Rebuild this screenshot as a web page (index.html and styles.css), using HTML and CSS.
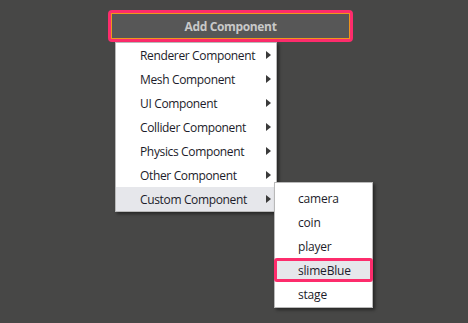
FILE: index.html
```html
<!DOCTYPE html>
<html>
<head>
<meta charset="utf-8">
<link rel="stylesheet" href="styles.css">
</head>
<body>
<div class="stage">
  <div class="dropdown">
    <div class="btn-frame">
      <div class="btn">Add Component</div>
    </div>
    <ul class="menu">
      <li class="item">Renderer Component<span class="arrow"></span></li>
      <li class="item">Mesh Component<span class="arrow"></span></li>
      <li class="item">UI Component<span class="arrow"></span></li>
      <li class="item">Collider Component<span class="arrow"></span></li>
      <li class="item">Physics Component<span class="arrow"></span></li>
      <li class="item">Other Component<span class="arrow"></span></li>
      <li class="item active">Custom Component<span class="arrow"></span>
        <ul class="submenu">
          <li class="sub">camera</li>
          <li class="sub">coin</li>
          <li class="sub">player</li>
          <li class="sub selected">slimeBlue</li>
          <li class="sub">stage</li>
        </ul>
      </li>
    </ul>
  </div>
</div>
</body>
</html>
```

FILE: styles.css
```css
* { box-sizing: border-box; }
html, body {
  margin: 0;
  padding: 0;
  background: #474746;
  width: 468px;
  height: 323px;
  overflow: hidden;
  font-family: "Open Sans", "Noto Sans", sans-serif;
}
.stage {
  padding: 10px 0 0 108px;
}
.dropdown {
  position: relative;
  width: 245px;
}
.btn-frame {
  height: 32px;
  border: 3px solid #fd2c6c;
  border-radius: 4px;
}
.btn {
  height: 100%;
  border: 1px solid #f0951c;
  background: #575757;
  color: #c9c9c9;
  font-weight: 700;
  font-size: 12px;
  letter-spacing: -0.35px;
  display: flex;
  align-items: center;
  justify-content: center;
}
.menu {
  position: absolute;
  left: 7px;
  top: 32px;
  width: 162px;
  margin: 0;
  padding: 0;
  list-style: none;
  background: #ffffff;
  border: 1px solid #b9b9b9;
  box-shadow: 2px 2px 3px rgba(0,0,0,0.45);
}
.item {
  position: relative;
  height: 24px;
  padding-left: 24px;
  display: flex;
  align-items: center;
  font-size: 12px;
  letter-spacing: -0.35px;
  color: #1c1c2a;
}
.item.active { background: #e6e7eb; }
.arrow {
  position: absolute;
  left: 150px;
  top: 8px;
  width: 0;
  height: 0;
  border-top: 4px solid transparent;
  border-bottom: 4px solid transparent;
  border-left: 5px solid #3a3a3a;
}
.submenu {
  position: absolute;
  left: 158px;
  top: -5px;
  width: 99px;
  margin: 0;
  padding: 3px 0 1px;
  list-style: none;
  background: #ffffff;
  border: 1px solid #b9b9b9;
  box-shadow: 2px 2px 3px rgba(0,0,0,0.45);
  letter-spacing: -0.2px;
}
.sub {
  height: 24px;
  padding-left: 23px;
  display: flex;
  align-items: center;
  font-size: 12px;
  color: #1c1c2a;
}
.sub.selected {
  margin: 0 -1px;
  padding-left: 21px;
  background: #e6e7eb;
  border: 3px solid #fd2c6c;
  border-radius: 3px;
}
```
